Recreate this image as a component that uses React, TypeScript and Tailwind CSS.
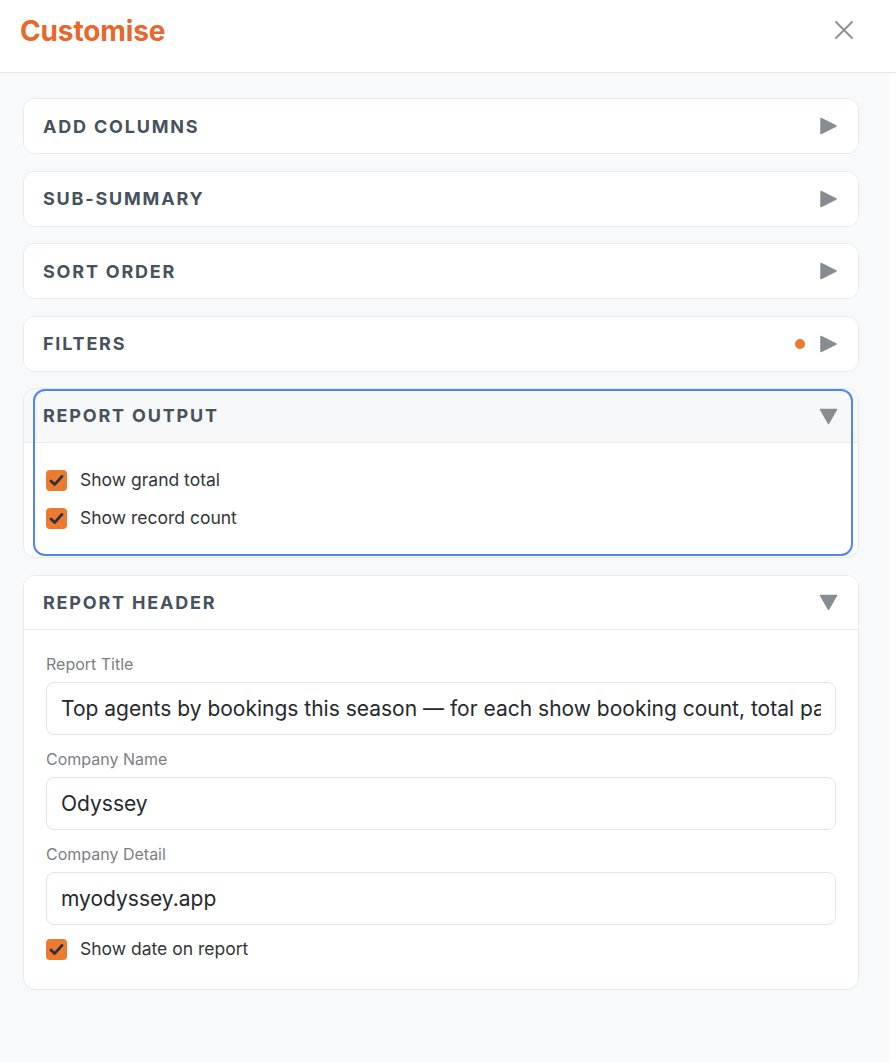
import React, { useState } from 'react';

const FONT = "font-['Inter','Noto_Sans',sans-serif]";

function Arrow({ open }: { open: boolean }) {
  return (
    <svg width="19" height="18" viewBox="0 0 19 18" className="text-[#878d92]">
      {open ? (
        <path d="M1.5 2.5 H17.5 L9.5 16.5 Z" fill="currentColor" stroke="currentColor" strokeWidth="1.5" strokeLinejoin="round" />
      ) : (
        <path d="M2 1.5 V16.5 L17 9 Z" fill="currentColor" stroke="currentColor" strokeWidth="1.5" strokeLinejoin="round" />
      )}
    </svg>
  );
}

function Check({ label, checked, onToggle }: { label: string; checked: boolean; onToggle: () => void }) {
  return (
    <label className="flex items-center gap-[13px] h-[24px] cursor-pointer select-none" onClick={onToggle}>
      <span className={`w-[21px] h-[21px] rounded-[4px] flex items-center justify-center ${checked ? 'bg-[#ec7a30]' : 'bg-white border border-gray-400'}`}>
        {checked && (
          <svg width="15" height="13" viewBox="0 0 15 13">
            <path d="M2 7 L5.6 10.6 L13 2.4" fill="none" stroke="#2e3136" strokeWidth="2.8" strokeLinecap="round" strokeLinejoin="round" />
          </svg>
        )}
      </span>
      <span className="text-[17.5px] text-[#333639]">{label}</span>
    </label>
  );
}

function Field({ label, value }: { label: string; value: string }) {
  return (
    <label className="flex flex-col">
      <span className="text-[16px] text-[#7b7f84] leading-[18px] mb-[9px]">{label}</span>
      <input
        defaultValue={value}
        className="h-[53px] rounded-[8px] border border-[#e1e4e8] bg-white px-[14px] text-[21px] text-[#26292c] outline-none"
      />
    </label>
  );
}

function Section({ title, dot, open, focused, onToggle, children }: {
  title: string;
  dot?: boolean;
  open?: boolean;
  focused?: boolean;
  onToggle: () => void;
  children?: React.ReactNode;
}) {
  return (
    <div className="relative bg-white rounded-[12px] border border-[#e6e9ed] overflow-hidden">
      <button
        onClick={onToggle}
        className={`w-full h-[54px] flex items-center justify-between pl-[19px] pr-[20px] ${open && focused ? 'bg-[#f7f8fa]' : 'bg-white'} ${open ? 'border-b border-[#e9ecef]' : ''}`}
      >
        <span className="text-[18px] font-bold tracking-[0.1em] text-[#46525c]">{title}</span>
        <span className="flex items-center gap-[14px]">
          {dot && <span className="w-[10px] h-[10px] rounded-full bg-[#ec7a30]" />}
          <Arrow open={!!open} />
        </span>
      </button>
      {open && children}
      {/* focus outline on the active panel */}
      {focused && (
        <div className="absolute left-[9px] right-[5px] top-0 bottom-[1px] rounded-[12px] border-2 border-[#4f86f1] pointer-events-none" />
      )}
    </div>
  );
}

export default function App() {
  const [open, setOpen] = useState<Record<string, boolean>>({ output: true, header: true });
  const [grand, setGrand] = useState(true);
  const [count, setCount] = useState(true);
  const [date, setDate] = useState(true);
  const toggle = (k: string) => setOpen(o => ({ ...o, [k]: !o[k] }));

  return (
    <div className={`${FONT} w-[896px] min-h-[1062px] bg-white flex flex-col`}>
      <header className="h-[73px] shrink-0 bg-white border-b border-[#e3e6ea] flex items-center justify-between pl-5 pr-[42px]">
        <h1 className="text-[28px] font-bold text-[#e8672a] tracking-[-0.005em] -mt-[11px]">Customise</h1>
        <button aria-label="Close" className="text-[#8e9297] -mt-[13px]">
          <svg width="20" height="20" viewBox="0 0 20 20">
            <path d="M2 2 L18 18 M18 2 L2 18" stroke="currentColor" strokeWidth="2" strokeLinecap="round" />
          </svg>
        </button>
      </header>

      <div className="flex flex-1">
        <main className="w-[889px] bg-[#f8f9fb] pl-[23px] pr-[30px] pt-[25px] pb-[72px] flex flex-col gap-[16.5px]">
          <Section title="ADD COLUMNS" onToggle={() => toggle('cols')} open={open.cols} />
          <Section title="SUB-SUMMARY" onToggle={() => toggle('sub')} open={open.sub} />
          <Section title="SORT ORDER" onToggle={() => toggle('sort')} open={open.sort} />
          <Section title="FILTERS" dot onToggle={() => toggle('filters')} open={open.filters} />
          <Section title="REPORT OUTPUT" focused open={open.output} onToggle={() => toggle('output')}>
            <div className="px-[22px] pt-[25px] pb-[27px] flex flex-col gap-[14px]">
              <Check label="Show grand total" checked={grand} onToggle={() => setGrand(v => !v)} />
              <Check label="Show record count" checked={count} onToggle={() => setCount(v => !v)} />
            </div>
          </Section>
          <Section title="REPORT HEADER" open={open.header} onToggle={() => toggle('header')}>
            <div className="px-[22px] pt-[25px] pb-[27px] flex flex-col gap-[13px]">
              <div className="flex flex-col gap-[15px]">
                <Field label="Report Title" value="Top agents by bookings this season — for each show booking count, total pax and revenue" />
                <Field label="Company Name" value="Odyssey" />
                <Field label="Company Detail" value="myodyssey.app" />
              </div>
              <Check label="Show date on report" checked={date} onToggle={() => setDate(v => !v)} />
            </div>
          </Section>
        </main>
        <div className="flex-1 bg-white" />
      </div>
    </div>
  );
}
